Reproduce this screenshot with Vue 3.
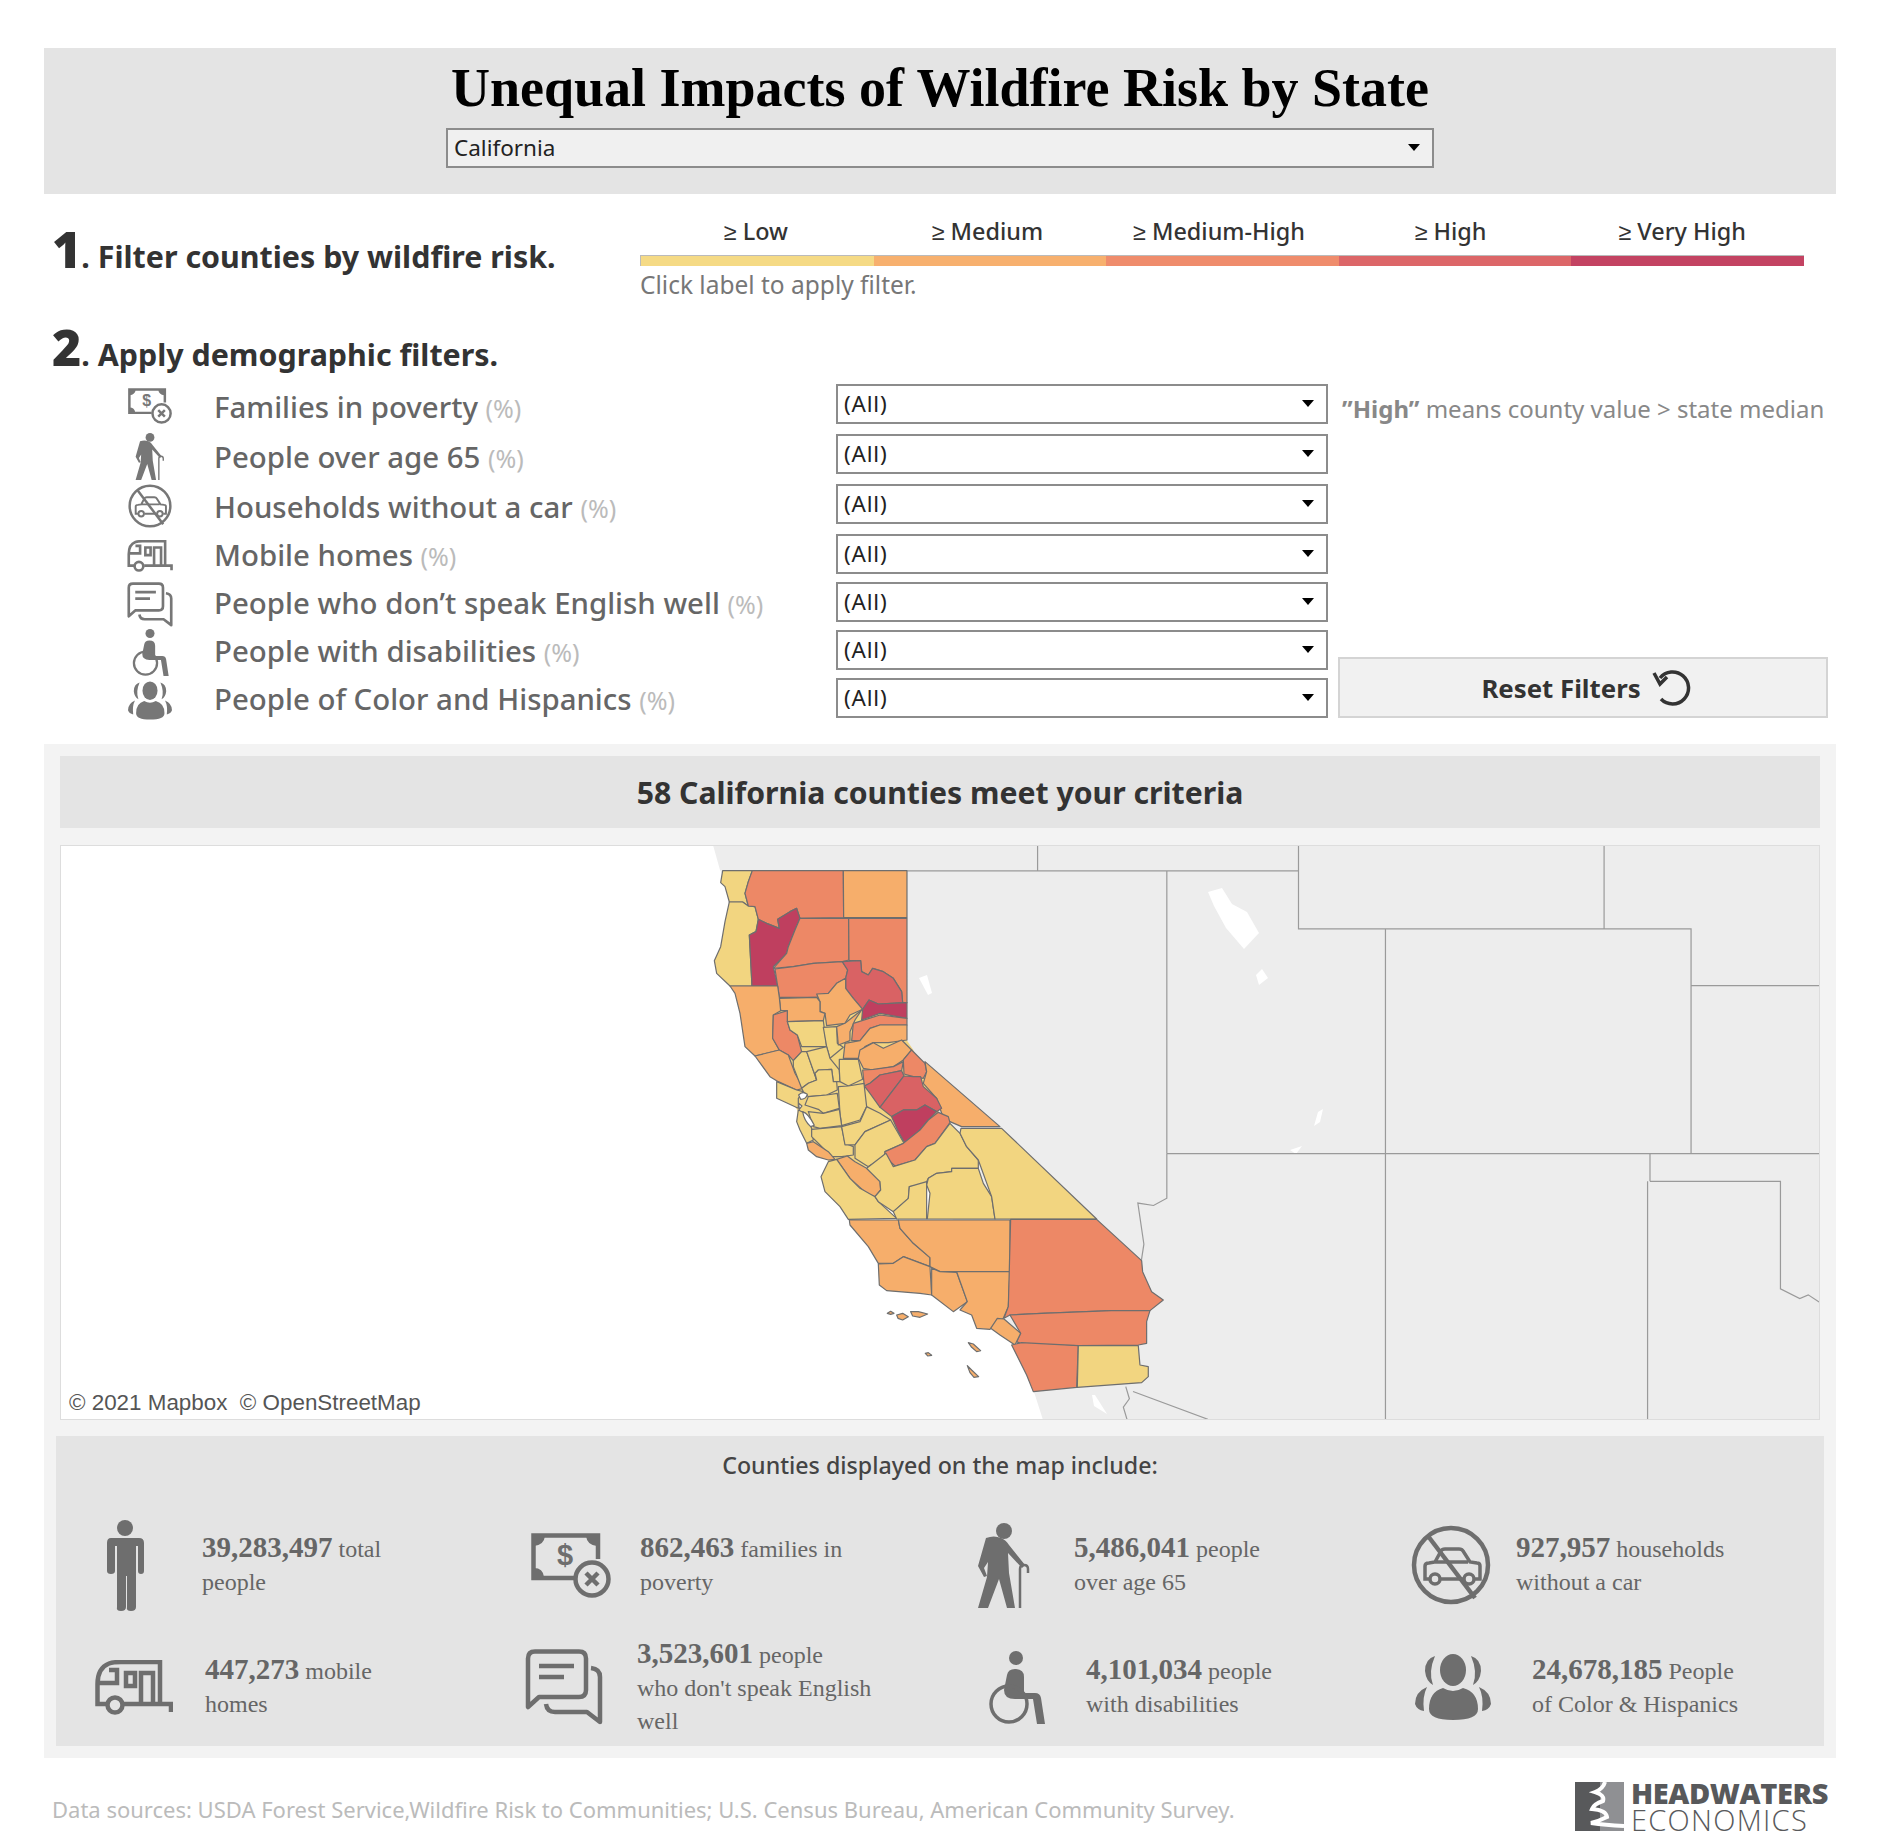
<template>
  <div class="page">
    <svg class="defs">
      <symbol id="person" viewBox="0 0 40 92">
        <circle cx="20" cy="9" r="8" fill="currentColor" />
        <path fill="currentColor" d="M6 19h28q5 0 5 5v28q0 3-3 3t-3-3V27h-2v61q0 4-5 4t-4-4V57h-1v31q0 4-5 4t-4-4V27H10v25q0 3-4 3t-4-3V24q0-5 4-5z" />
      </symbol>
      <symbol id="money" viewBox="0 0 80 65">
        <path fill="none" stroke="currentColor" stroke-width="4.5" d="M43 45H2.5V2.5H67V26" />
        <path fill="currentColor" d="M3 3h11q-1 9-11 10zM66 3H55q1 9 11 10zM3 44h10q-1-9-10-9z" />
        <text x="34" y="32" text-anchor="middle" font-family="Liberation Sans, sans-serif" font-weight="700" font-size="29" fill="currentColor">$</text>
        <circle cx="61" cy="46" r="16.5" fill="none" stroke="currentColor" stroke-width="4.5" />
        <path fill="none" stroke="currentColor" stroke-width="4.5" d="M55 40l12 12M67 40L55 52" />
      </symbol>
      <symbol id="elder" viewBox="0 0 52 85">
        <circle cx="26" cy="8" r="8" fill="currentColor" />
        <path fill="currentColor" d="M8 15q8-3 15 0 5 2 8 7l16 20-3 3-14-15 1 20 6 35h-8l-8-29-11 29H0l9-31 1-15-4 6 3 8-3 1-6-11z" />
        <path fill="none" stroke="currentColor" stroke-width="2.5" d="M42 85V46q0-4 4-4t4 4v4" />
      </symbol>
      <symbol id="nocar" viewBox="0 0 80 80">
        <circle cx="40" cy="40" r="37" fill="none" stroke="currentColor" stroke-width="4.5" />
        <path fill="none" stroke="currentColor" stroke-width="4.5" d="M17 11l47 62" />
        <path fill="none" stroke="currentColor" stroke-width="3.5" d="M18 54h-4V41q0-3 4-3l6-1 6-11q1-2 4-2h14q3 0 4 2l7 11 7 1q3 0 3 3v13h-5M30 54h22M24 37h33" />
        <circle cx="24" cy="54" r="5" fill="none" stroke="currentColor" stroke-width="3.5" />
        <circle cx="58" cy="54" r="5" fill="none" stroke="currentColor" stroke-width="3.5" />
      </symbol>
      <symbol id="rv" viewBox="0 0 78 55">
        <path fill="none" stroke="currentColor" stroke-width="4.5" d="M12 44H2.5V24Q2.500 8 14 3.500 18 2 26 2h39v42H29M65 44h11v8M3 23h19V10h-8M31 13h9v13h-9zM46 44V13h12v31" />
        <circle cx="20" cy="45" r="7.500" fill="none" stroke="currentColor" stroke-width="4.5" />
      </symbol>
      <symbol id="chat" viewBox="0 0 78 76">
        <path fill="none" stroke="currentColor" stroke-width="4.500" stroke-linejoin="round" d="M10 2.500h44q7 0 7 7V41q0 7-7 7H14L3 58V9.500q0-7 7-7zM66 19q9 1 9 9v45L62 63H30q-8 0-9-8" />
        <path fill="none" stroke="currentColor" stroke-width="4.500" d="M14 17h35M14 28h25" />
      </symbol>
      <symbol id="wheel" viewBox="0 0 58 73">
        <circle cx="29" cy="7" r="7" fill="currentColor" />
        <path fill="currentColor" d="M20 24q1-6 8-6 9 0 9 8v16h11q5 0 6 5l4 26h-8l-4-25H28q-11 0-11-9z" />
        <circle cx="22" cy="53" r="18" fill="none" stroke="currentColor" stroke-width="3.500" />
      </symbol>
      <symbol id="people" viewBox="0 0 76 66">
        <ellipse cx="38" cy="16" rx="13" ry="16" fill="currentColor" />
        <path fill="currentColor" d="M14 55q0-17 14-21 10 6 20 0 15 4 15 21 0 11-25 11-24 0-24-11zM20 2Q10 5 10 17q1 10 8 14-5-13 2-29zM56 2q10 3 10 15-1 10-8 14 5-13-2-29zM12 33Q0 38 0 50q2 6 9 7-2-14 3-24zM64 33q12 5 12 17-2 6-9 7 2-14-3-24z" />
      </symbol>
    </svg>

    <header class="top">
      <h1>Unequal Impacts of Wildfire Risk by State</h1>
      <div class="select state"><span>California</span><i></i></div>
    </header>

    <section class="step1">
      <div class="step-title"><b>1</b>. Filter counties by wildfire risk.</div>
      <div class="risk">
        <div class="risk-labels">
          <span v-for="r in risks" :key="r.label">≥ {{ r.label }}</span>
        </div>
        <div class="risk-bar">
          <span v-for="r in risks" :key="r.label" :style="{ background: r.color }"></span>
        </div>
        <div class="hint">Click label to apply filter.</div>
      </div>
    </section>

    <div class="step-title second"><b>2</b>. Apply demographic filters.</div>
    <section class="filters">
      <div class="rows">
        <div v-for="f in filters" :key="f.label" class="row">
          <div class="row-icon">
            <svg :style="{ width: f.w + 'px', height: f.h + 'px' }"><use :href="'#' + f.icon" /></svg>
          </div>
          <div class="row-label">{{ f.label }} <small>(%)</small></div>
          <div class="select"><span>(All)</span><i></i></div>
        </div>
      </div>
      <div class="side">
        <div class="note"><b>”High”</b> means county value &gt; state median</div>
        <div class="reset">
          Reset Filters
          <svg width="40" height="36" viewBox="0 0 40 36">
            <path fill="none" stroke="#333" stroke-width="3.500" d="M9 8a16 16 0 1 1 1 21M3 3l6 11 7-7" />
          </svg>
        </div>
      </div>
    </section>

    <section class="panel">
      <div class="panel-title">58 California counties meet your criteria</div>
      <div class="map">
        <svg width="1758" height="573" viewBox="61 846 1758 573">
          <path fill="#ededed" d="M713 845H1820V1420H1043L1035 1395L1033 1390L920 1150L800 1000L720 870Z" />
          <g fill="#fff">
            <path v-for="(d, i) in water" :key="i" :d="d" />
          </g>
          <g transform="scale(1.2079)" fill="none" stroke="#9a9a9a" stroke-width="1">
            <path v-for="(d, i) in lines" :key="i" :d="d" />
          </g>
          <g transform="translate(680 850) scale(.3333)" stroke="#6e6e6e" stroke-width="3.600" stroke-linejoin="round">
            <path fill="#f2d580" stroke="none" d="M300,445L680,445L680,570L700,600L770,760L780,800L700,950L460,950L395,870L360,840L352,780L295,700L278,620L280,500Z" />
            <path v-for="(c, i) in north" :key="i" :d="c[1]" :fill="risks[c[0]].fill" />
            <path fill="#fff" d="M356,735Q368,722 382,733Q378,748 362,748ZM356,760L366,768L358,778ZM368,785Q385,790 403,826L392,830Q372,812 368,785Z" />
          </g>
          <g transform="translate(760 1100) scale(.3333)" stroke="#6e6e6e" stroke-width="3.600" stroke-linejoin="round">
            <path v-for="(c, i) in south" :key="i" :d="c[1]" :fill="risks[c[0]].fill" />
          </g>
        </svg>
        <div class="credit">© 2021 Mapbox&nbsp; © OpenStreetMap</div>
      </div>
      <div class="stats">
        <div class="stats-title">Counties displayed on the map include:</div>
        <div class="stats-grid">
          <div v-for="s in stats" :key="s.num" class="stat">
            <svg :style="{ width: s.w + 'px', height: s.h + 'px', marginLeft: s.left + 'px' }"><use :href="'#' + s.icon" /></svg>
            <div class="stat-text" :style="{ left: s.text + 'px' }">
              <b>{{ s.num }}</b> {{ s.lines[0] }}
              <div v-for="l in s.lines.slice(1)" :key="l">{{ l }}</div>
            </div>
          </div>
        </div>
      </div>
    </section>

    <footer class="foot">
      <div class="sources">Data sources: USDA Forest Service,Wildfire Risk to Communities; U.S. Census Bureau, American Community Survey.</div>
      <div class="logo">
        <svg width="49" height="49" viewBox="0 0 49 49">
          <rect width="25" height="49" fill="#58595b" />
          <rect x="25" width="24" height="49" fill="#8f9093" />
          <path fill="none" stroke="#fff" stroke-width="4" d="M30 0q-2 7-10 10 10 3 8 9-9 3-11 8 14 1 15 8-8 4-16 6 14 2 33 3" />
        </svg>
        <div class="logo-text"><b>HEADWATERS</b><span>ECONOMICS</span></div>
      </div>
    </footer>
  </div>
</template>

<script setup>
const risks = [
  { label: 'Low', color: '#f5da85', fill: '#f2d580' },
  { label: 'Medium', color: '#f7b06e', fill: '#f6ae6b' },
  { label: 'Medium-High', color: '#ef8c6c', fill: '#ed8866' },
  { label: 'High', color: '#dc6668', fill: '#d96264' },
  { label: 'Very High', color: '#c34362', fill: '#bf3f5f' }
]

const filters = [
  { icon: 'money', label: 'Families in poverty', w: 44, h: 36 },
  { icon: 'elder', label: 'People over age 65', w: 30, h: 47 },
  { icon: 'nocar', label: 'Households without a car', w: 44, h: 44 },
  { icon: 'rv', label: 'Mobile homes', w: 46, h: 32 },
  { icon: 'chat', label: 'People who don’t speak English well', w: 46, h: 45 },
  { icon: 'wheel', label: 'People with disabilities', w: 38, h: 47 },
  { icon: 'people', label: 'People of Color and Hispanics', w: 44, h: 39 }
]

const stats = [
  { icon: 'person', w: 40, h: 92, left: 29, text: 126, num: '39,283,497', lines: ['total', 'people'] },
  { icon: 'money', w: 80, h: 65, left: 15, text: 124, num: '862,463', lines: ['families in', 'poverty'] },
  { icon: 'elder', w: 52, h: 85, left: 22, text: 118, num: '5,486,041', lines: ['people', 'over age 65'] },
  { icon: 'nocar', w: 80, h: 80, left: 15, text: 120, num: '927,957', lines: ['households', 'without a car'] },
  { icon: 'rv', w: 78, h: 55, left: 19, text: 129, num: '447,273', lines: ['mobile', 'homes'] },
  { icon: 'chat', w: 78, h: 76, left: 9, text: 121, num: '3,523,601', lines: ['people', 'who don\'t speak English', 'well'] },
  { icon: 'wheel', w: 58, h: 73, left: 31, text: 130, num: '4,101,034', lines: ['people', 'with disabilities'] },
  { icon: 'people', w: 76, h: 66, left: 19, text: 136, num: '24,678,185', lines: ['People', 'of Color & Hispanics'] }
]

// county outlines, traced from the map at 3x
const north = [
  [0, 'M128,62L217,62L205,95L195,130L205,168L188,156L148,156L135,110L122,98Z'],
  [0, 'M148,156L188,156L205,168L225,170L235,208L228,245L208,255L216,408L150,408L110,370L103,332L122,290L135,215Z'],
  [2, 'M217,62L490,62L491,203L360,205L350,175L330,185L293,208L298,235L260,220L235,208L225,170L205,168L195,130L205,95Z'],
  [1, 'M490,62L681,62L681,203L491,203Z'],
  [4, 'M235,208L260,220L298,235L293,208L330,185L350,175L360,205L345,240L325,290L320,310L280,350L293,408L216,408L208,255L228,245Z'],
  [2, 'M360,205L506,205L507,330L487,335L400,340L340,350L280,355L320,310L325,290L345,240Z'],
  [2, 'M506,205L681,205L681,458L668,458L665,425L640,385L610,365L578,355L565,375L545,365L542,332L507,332Z'],
  [2, 'M285,357L340,350L400,340L487,335L503,360L497,385L470,400L445,430L410,442L298,442L293,408Z'],
  [3, 'M487,335L542,332L545,365L565,375L578,355L610,365L640,385L665,425L668,458L595,462L567,450L548,478L520,445L497,415L497,385L503,360Z'],
  [4, 'M567,450L595,462L681,458L681,505L600,490L545,510L548,478Z'],
  [1, 'M410,432L445,430L470,400L497,385L497,415L520,445L548,478L510,495L495,520L440,527L435,490L420,485L420,455Z'],
  [1, 'M298,445L410,442L420,455L420,485L435,490L430,512L322,515L322,482L302,482Z'],
  [1, 'M150,408L216,408L293,408L298,442L302,482L280,495L278,565L298,600L225,618L195,590L180,490L165,430Z'],
  [2, 'M280,495L322,482L322,515L330,540L352,555L365,605L340,632L325,615L298,600L278,565Z'],
  [0, 'M322,515L430,512L440,590L365,590L352,555L330,540Z'],
  [0, 'M430,532L470,530L472,580L490,592L450,625L440,590Z'],
  [1, 'M470,530L495,520L545,480L525,510L510,545L510,572L475,585Z'],
  [2, 'M520,520L600,495L681,505L681,525L600,525L570,535L540,572L515,572Z'],
  [1, 'M495,580L540,572L570,535L600,525L681,525L681,570L625,578L580,578L555,590L535,625L490,625Z'],
  [1, 'M540,600L580,578L610,595L665,570L695,600L670,630L640,650L580,660L550,655L535,625Z'],
  [2, 'M548,660L580,658L640,650L670,635L665,662L600,675L570,700L553,708Z'],
  [2, 'M670,630L695,600L735,640L740,665L730,685L700,680L672,672Z'],
  [1, 'M735,635L960,830L845,830L810,815L785,790L770,745L730,700L740,665Z'],
  [3, 'M553,708L570,700L600,675L665,662L672,678L640,720L600,772L570,730Z'],
  [3, 'M672,678L700,680L722,680L730,710L770,745L785,775L770,785L735,765L710,780L670,780L635,800L600,772L640,720Z'],
  [4, 'M635,800L670,780L710,780L735,765L770,785L745,810L720,840L675,880L655,845Z'],
  [1, 'M225,618L298,600L325,615L345,670L370,715L350,720L295,695L270,680Z'],
  [0, 'M290,695L350,720L370,725L355,745L355,775L290,745Z'],
  [0, 'M365,605L380,605L410,690L385,700L365,715L340,650L340,632Z'],
  [0, 'M380,605L440,590L450,625L478,660L480,695L460,695L455,658L415,660L405,670L410,690Z'],
  [0, 'M405,670L415,660L455,658L460,695L470,695L472,720L440,735L385,740L370,725L365,715L385,700L410,690Z'],
  [0, 'M478,628L535,628L548,688L505,708L480,695L478,660Z'],
  [0, 'M475,710L505,708L552,700L560,770L540,810L485,827L480,790Z'],
  [0, 'M385,740L440,735L472,730L478,775L430,790L415,778L375,765Z'],
  [0, 'M385,785L430,790L478,778L485,827L420,835L400,830Z'],
  [0, 'M355,780L375,790L395,835L400,870L380,880L360,840L350,815Z'],
  [0, 'M395,838L485,830L495,880L520,890L520,915L485,920L455,920L420,885L395,860Z'],
  [0, 'M485,830L540,815L560,770L600,790L632,810L555,845L525,885L495,885Z'],
  [0, 'M525,885L555,845L632,810L672,880L615,905L615,920L565,950L525,925Z']
]

const south = [
  [2, 'M535,37L565,50L570,68L525,130L500,140L465,180L405,198L375,170L375,155L430,130L480,90L505,60Z'],
  [1, 'M140,130L160,125L205,155L225,178L205,180L170,170L145,150Z'],
  [1, 'M230,178L262,168L285,185L320,205L360,245L362,270L345,290L320,280L270,235Z'],
  [0, 'M205,185L230,178L270,235L300,265L345,290L355,305L410,355L265,358L240,320L195,275L183,230Z'],
  [0, 'M320,205L378,160L400,200L465,180L500,140L525,130L570,70L600,100L620,140L655,180L655,205L575,205L575,215L530,220L505,235L495,255L448,260L445,295L400,335L355,305L345,290L362,270L360,245Z'],
  [0, 'M400,335L445,295L448,260L500,245L500,357L410,357Z'],
  [0, 'M505,235L530,220L575,215L575,205L655,205L670,250L695,290L705,357L502,357L510,280L500,255Z'],
  [0, 'M603,85L725,85L1010,357L705,357L695,290L655,180L620,140L600,100Z'],
  [1, 'M268,360L415,360L420,385L460,430L510,473L510,500L430,470L400,490L355,490L325,440L270,375Z'],
  [1, 'M415,360L750,360L750,515L590,515L540,515L510,500L510,473L460,430L420,385Z'],
  [1, 'M355,492L400,490L430,470L510,500L515,585L480,580L380,572L358,555Z'],
  [1, 'M515,505L540,515L590,517L622,605L580,635L515,585Z'],
  [1, 'M590,515L750,515L745,620L730,655L690,688L650,685L635,645L600,630L622,605Z'],
  [2, 'M752,358L1010,358L1145,482L1148,515L1175,575L1210,600L1170,632L1055,632L845,640L750,645L732,655L745,620Z'],
  [2, 'M750,645L845,640L1055,632L1170,632L1160,665L1160,730L1135,735L955,737L790,735L770,725L782,700Z'],
  [1, 'M692,685L712,655L732,657L782,700L765,735L720,705Z'],
  [2, 'M755,735L785,728L955,737L950,862L820,875L800,825Z'],
  [0, 'M955,737L1135,737L1140,795L1165,800L1165,830L1145,848L952,862Z'],
  [1, 'M382,640L392,634L402,640L392,643Z'],
  [1, 'M410,645L428,640L445,650L428,660L414,655Z'],
  [1, 'M452,635L475,635L503,642L480,652L458,648Z'],
  [1, 'M625,728L640,732L662,752L650,755L635,742Z'],
  [1, 'M496,760L505,758L515,766L503,768Z'],
  [1, 'M622,797L635,810L656,830L642,832L630,818Z']
]

const water = [
  'M1208,892L1222,888L1232,904L1247,912L1259,933L1244,949L1226,928L1214,906Z',
  'M1262,969L1268,978L1259,985L1256,975Z',
  'M919,978L927,975L932,993L928,995Z',
  'M1323,1109L1320,1122L1314,1126L1318,1112Z',
  'M1290,1150L1302,1146L1296,1154Z',
  'M1092,1395L1095,1395L1107,1414L1094,1406Z'
]

const lines = [
  'M751 721H1075M859 699V721M966 721V955M1075 699V769H1147V955M1147 769H1400V955M1328 699V769',
  'M1400 816H1506M966 955H1506M1147 955V1175M1366 955V978M1364 978V1175M1366 978H1474V1067L1490 1075L1497 1072L1506 1078',
  'M966 955V992L955 998L942 996L947 1030L945 1043',
  'M932 1148L935 1158L930 1165L933 1175M938 1152L1000 1175'
]
</script>

<style scoped>
.page {
  width: 1792px;
  height: 1844px;
  padding: 48px 0 0 44px;
  box-sizing: content-box;
  font-family: "Noto Sans", sans-serif;
  color: #333;
}
.defs {
  display: none;
}
.top {
  height: 146px;
  background: #e4e4e4;
  display: flex;
  flex-direction: column;
  align-items: center;
}
h1 {
  margin: 8px 0 0;
  height: 72px;
  line-height: 64px;
  font-family: "Liberation Serif", serif;
  font-size: 54px;
  font-weight: 700;
  color: #000;
}
.select {
  height: 40px;
  box-sizing: border-box;
  border: 2px solid #8c8c8c;
  background: #fff;
  display: flex;
  align-items: center;
  justify-content: space-between;
  padding: 0 12px 2px 6px;
  font-size: 22.5px;
  color: #222;
  width: 492px;
  flex: none;
}
.select i {
  border-left: 6px solid transparent;
  border-right: 6px solid transparent;
  border-top: 7px solid #000;
}
.select.state {
  width: 988px;
  background: #f0f0f0;
}
.rows .select span {
  letter-spacing: 0.8px;
}
.step1 {
  display: flex;
  height: 130px;
}
.step-title {
  width: 588px;
  padding: 24px 0 0 8px;
  font-size: 30.4px;
  font-weight: 700;
  line-height: 62px;
  color: #333;
}
.step-title b {
  font-size: 50px;
}
.step-title.second {
  width: auto;
  padding-top: 0;
  height: 66px;
  margin-top: -8px;
}
.risk {
  width: 1164px;
}
.risk-labels {
  display: flex;
  height: 61px;
  padding: 21px 6px 0 0;
  box-sizing: border-box;
  font-size: 23.4px;
  line-height: 32px;
  font-weight: 500;
}
.risk-labels span {
  flex: 1;
  text-align: center;
}
.risk-bar {
  display: flex;
  height: 10px;
  border-top: 1px solid #bbb;
  border-left: 1px solid #bbb;
}
.risk-bar span {
  flex: 1;
}
.hint {
  font-size: 24.5px;
  line-height: 36px;
  color: #777;
  margin-top: 1px;
}
.filters {
  display: flex;
  height: 362px;
}
.rows {
  width: 1284px;
  padding-top: 2px;
}
.row {
  display: flex;
  height: 40px;
  margin-bottom: 10px;
}
.row:nth-child(n + 4) {
  margin-bottom: 8px;
}
.row-icon {
  width: 170px;
  padding-left: 42px;
  box-sizing: border-box;
  display: flex;
  align-items: center;
  justify-content: center;
  position: relative;
  top: 2px;
}
.row-icon svg {
  flex: none;
  color: #777;
}
.row-label {
  width: 622px;
  font-size: 29.4px;
  line-height: 46px;
  font-weight: 500;
  color: #666;
  white-space: nowrap;
}
.row:nth-child(n + 4) .row-label {
  line-height: 43px;
}
.row-label small {
  font-size: 25px;
  color: #bbb;
  font-weight: 400;
}
.side {
  width: 490px;
  margin-left: 10px;
  display: flex;
  flex-direction: column;
  justify-content: space-between;
}
.note {
  padding: 9px 0 0 4px;
  font-size: 24px;
  line-height: 36px;
  color: #888;
  white-space: nowrap;
}
.reset {
  height: 61px;
  box-sizing: border-box;
  border: 2px solid #d4d4d4;
  background: #f1f1f1;
  display: flex;
  align-items: center;
  justify-content: center;
  gap: 10px;
  padding-left: 6px;
  font-size: 25.8px;
  font-weight: 700;
  color: #333;
  margin-bottom: 26px;
}
.panel {
  height: 1014px;
  box-sizing: border-box;
  background: #f3f3f3;
  padding: 12px 16px;
}
.panel-title {
  height: 72px;
  background: #e4e4e4;
  display: flex;
  align-items: center;
  justify-content: center;
  font-size: 30.2px;
  font-weight: 700;
  color: #333;
}
.map {
  position: relative;
  height: 575px;
  margin-top: 17px;
  border: 1px solid #ddd;
  box-sizing: border-box;
  background: #fff;
  line-height: 0;
}
.credit {
  position: absolute;
  left: 6px;
  bottom: 0;
  padding: 0 2px;
  background: rgba(255, 255, 255, 0.6);
  font-family: "Liberation Sans", sans-serif;
  font-size: 22.4px;
  line-height: 32px;
  color: #555;
}
.stats {
  height: 310px;
  margin: 16px -4px 0;
  background: #e4e4e4;
}
.stats-title {
  padding-top: 12px;
  text-align: center;
  font-size: 23.2px;
  line-height: 34px;
  font-weight: 500;
  color: #444;
}
.stats-grid {
  display: grid;
  grid-template-columns: repeat(4, 440px);
  grid-auto-rows: 122px;
  padding: 22px 0 0 20px;
}
.stat {
  position: relative;
  display: flex;
  align-items: center;
}
.stat svg {
  flex: none;
  color: #6e6e6e;
}
.stat-text {
  position: absolute;
  top: 50%;
  transform: translateY(-50%);
  font-family: "Liberation Serif", serif;
  font-size: 24px;
  line-height: 33px;
  color: #666;
  white-space: nowrap;
}
.stat-text b {
  font-size: 29px;
}
.foot {
  display: flex;
  justify-content: space-between;
  align-items: center;
  width: 1776px;
  padding: 21px 0 0 8px;
}
.sources {
  font-size: 22px;
  color: #bbb;
  padding-top: 6px;
}
.logo {
  display: flex;
  gap: 7px;
  align-items: center;
}
.logo-text {
  display: flex;
  flex-direction: column;
  color: #58595b;
  font-family: "Open Sans", sans-serif;
  font-size: 29px;
  line-height: 27px;
}
.logo-text b {
  font-weight: 800;
  letter-spacing: -0.4px;
}
.logo-text span {
  font-weight: 300;
  letter-spacing: 1.3px;
}
</style>

<style>
html,
body {
  margin: 0;
  background: #fff;
}
</style>
